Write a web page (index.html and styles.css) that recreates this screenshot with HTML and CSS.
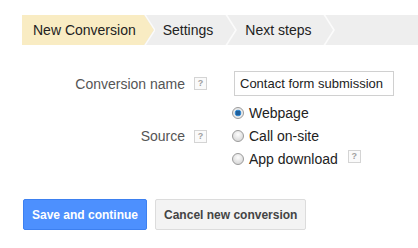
FILE: index.html
```html
<!doctype html>
<html lang="en">
<head>
  <meta charset="utf-8" />
  <title>New Conversion</title>
  <link rel="stylesheet" href="styles.css">
</head>
<body>
  <!-- Steps -->
  <div class="steps">
    <div class="step current">New Conversion</div>
    <svg class="sep from-current" width="12" height="30" viewBox="0 0 12 30">
      <rect width="12" height="30" fill="#eeeeee"/>
      <polygon points="0,0 1,0 11,15 1,30 0,30" fill="currentColor"/>
      <polyline points="1.6,-1 11.8,15 1.6,31" fill="none" stroke="#fbfbfb" stroke-width="1.3"/>
    </svg>
    <div class="step">Settings</div>
    <svg class="sep" width="12" height="30" viewBox="0 0 12 30">
      <rect width="12" height="30" fill="#eeeeee"/>
      <polyline points="0.8,-1 11,15 0.8,31" fill="none" stroke="#fbfbfb" stroke-width="1.6"/>
    </svg>
    <div class="step">Next steps</div>
    <svg class="sep" width="12" height="30" viewBox="0 0 12 30">
      <rect width="12" height="30" fill="#eeeeee"/>
      <polyline points="0.8,-1 11,15 0.8,31" fill="none" stroke="#fbfbfb" stroke-width="1.6"/>
    </svg>
    <div class="step-rest"></div>
  </div>

  <!-- Form -->
  <form class="conv-form">
    <div class="row">
      <label class="label" for="convName">Conversion name</label>
      <div class="help-col"><span class="help">?</span></div>
      <input type="text" id="convName" class="text-input" value="Contact form submission">
    </div>

    <div class="row">
      <div class="label">Source</div>
      <div class="help-col"><span class="help">?</span></div>
      <div class="radios">
        <label class="radio"><input type="radio" name="source" value="webpage" checked><span>Webpage</span></label>
        <label class="radio"><input type="radio" name="source" value="call"><span>Call on-site</span></label>
        <label class="radio"><input type="radio" name="source" value="app"><span>App download</span><span class="help inline">?</span></label>
      </div>
    </div>

    <div class="actions">
      <button type="submit" class="btn primary">Save and continue</button>
      <button type="button" class="btn">Cancel new conversion</button>
    </div>
  </form>
</body>
</html>
```
FILE: styles.css
```css
:root {
  --yellow: #f9ecc3;
  --grey: #eeeeee;
  --blue: #4d90fe;
  font-family: "Liberation Sans", Arial, sans-serif;
}
html, body { margin:0; padding:0; background:#fff; }
body { padding:15px 0 0 22px; color:#222; }

/* Steps bar */
.steps { display:flex; height:30px; font-size:14px; }
.step {
  display:flex; align-items:center; background:var(--grey);
  padding:0 12px 0 8px; color:#222; white-space:nowrap;
}
.step.current { background:var(--yellow); padding:0 7px 0 11px; }
.sep { display:block; flex:none; }
.sep.from-current { color:var(--yellow); }
.step-rest { flex:1; background:var(--grey); }

/* Form */
.conv-form { margin-top:26px; }
.row { display:flex; align-items:center; }
.row + .row { margin-top:6px; }
.label {
  width:163px; text-align:right; font-size:14px; color:#555; flex:none;
}
.help-col { width:40px; padding-left:9px; flex:none; display:flex; }
.help {
  display:inline-flex; align-items:center; justify-content:center;
  width:11px; height:11px; border:1px solid #d4d4d4; background:#fafafa;
  color:#a0a0a0; font-size:9px; font-weight:bold; line-height:1;
}
.help.inline { margin-left:10px; position:relative; top:-3px; }
.text-input {
  width:160px; height:25px; box-sizing:border-box; margin:0;
  border:1px solid #d0d0d0; padding:0 0 0 5px;
  font-family:inherit; font-size:13px; color:#222;
}
.radios { display:flex; flex-direction:column; margin-left:-2px; }
.radio { display:flex; align-items:center; height:22px; font-size:14px; color:#222; }
.radio + .radio { margin-top:1px; }
.radio input {
  appearance:none; -webkit-appearance:none; margin:0 5px 0 0;
  width:12px; height:12px; border-radius:50%; box-sizing:border-box;
  border:1px solid #9a9a9a;
  background:radial-gradient(circle at 50% 35%, #fdfdfd, #dcdcdc 70%);
}
.radio input:checked {
  background:radial-gradient(circle, #1f5e9a 0 2.2px, #3b8ed4 2.6px 3.2px, #eaeaea 3.6px);
}

/* Buttons */
.actions { display:flex; gap:8px; margin-top:29px; padding-left:1px; }
.btn {
  height:31px; padding:0 8px; border-radius:2px;
  font-family:inherit; font-size:12px; font-weight:bold;
  border:1px solid #dcdcdc; background:#f3f3f3; color:#444; cursor:pointer;
}
.btn.primary { background:var(--blue); border-color:#3d80f0; color:#fff; }
```
